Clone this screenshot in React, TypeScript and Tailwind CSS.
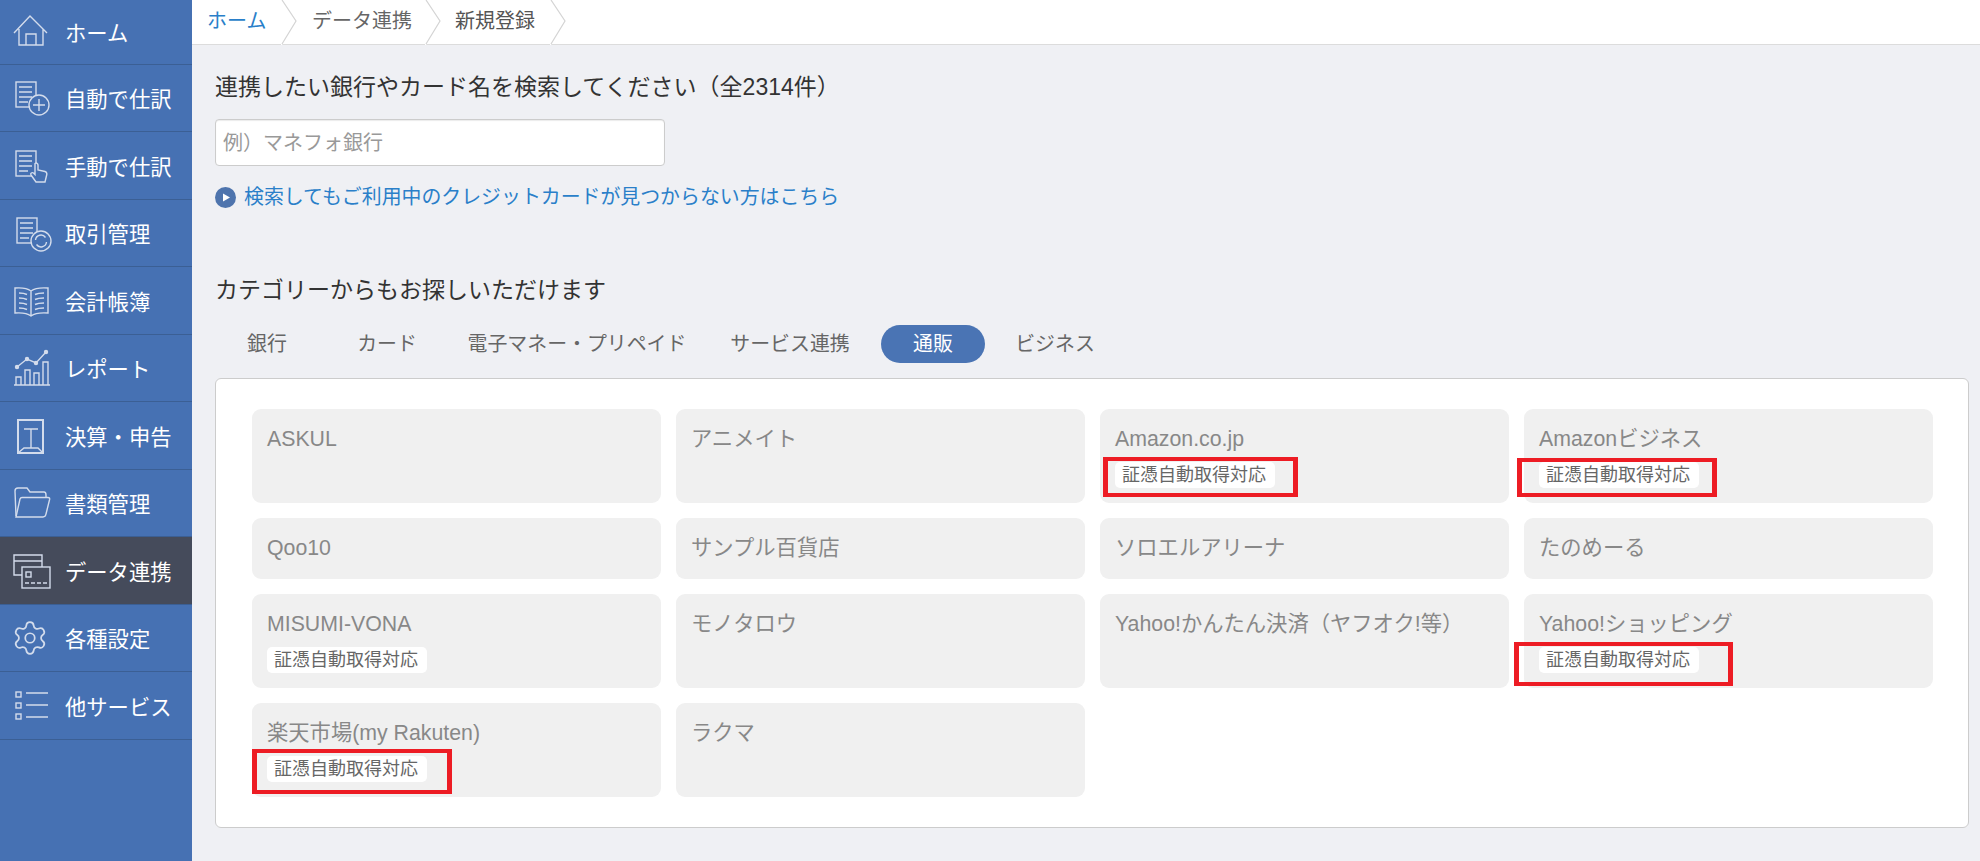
import type { ReactNode } from 'react';
import { Settings } from 'lucide-react';

const Doc = ({ x, y }: { x: number; y: number }) => (
    <>
        <rect x={x} y={y} width="20" height="25" />
        <path d={`M${x + 3} ${y + 5}h13M${x + 3} ${y + 10}h13M${x + 3} ${y + 15}h13M${x + 3} ${y + 20}h9`} />
    </>
);

const Icon = ({ children }: { children: ReactNode }) => (
    <svg viewBox="0 0 40 40" fill="none" stroke="currentColor" strokeWidth="1.4" className="w-10 h-10 shrink-0 text-[#d3dcec] overflow-visible">
        {children}
    </svg>
);

const sideItems: { label: string; active?: boolean; cls: string; icon: ReactNode }[] = [
    {
        label: 'ホーム',
        cls: 'h-[65px]',
        icon: (
            <Icon>
                <path d="M4 21 20 4l17 17M9 17v16h24V17M16 33V22h10v11" />
            </Icon>
        ),
    },
    {
        label: '自動で仕訳',
        cls: 'h-[67px]',
        icon: (
            <Icon>
                <Doc x={6} y={4} />
                <circle cx="29" cy="27" r="10" fill="#4671b3" />
                <path d="M29 21v12M23 27h12" />
            </Icon>
        ),
    },
    {
        label: '手動で仕訳',
        cls: 'h-[68px]',
        icon: (
            <Icon>
                <Doc x={6} y={5} />
                <path
                    d="M25 17.500c1.500-1 3 0 3 1.500V24l7 1.500c1.500.5 2 1.500 1.800 3L35 36H26l-5-7c-1-1.500 1-3 2.500-2l1.500 1.500Z"
                    fill="#4671b3"
                />
            </Icon>
        ),
    },
    {
        label: '取引管理',
        cls: 'h-[67px]',
        icon: (
            <Icon>
                <Doc x={7} y={5} />
                <circle cx="31" cy="28" r="10" fill="#4671b3" />
                <path d="M25.500 27a5.500 5.500 0 0 1 10-2.500M36.500 29a5.500 5.500 0 0 1-10 2.500" />
            </Icon>
        ),
    },
    {
        label: '会計帳簿',
        cls: 'h-[68px]',
        icon: (
            <Icon>
                <path d="M21 10C17 7 11 6.500 5 7v25c6-.5 12 0 16 3 4-3 10-3.500 17-3V7c-7-.5-13 0-17 3ZM21 10v25" />
                <path d="M9 12c3 0 6 .5 8 1.500M9 17c3 0 6 .5 8 1.500M9 22c3 0 6 .5 8 1.500M9 27c3 0 6 .5 8 1.500M34 12c-3 0-7 .5-9 1.500M34 17c-3 0-7 .5-9 1.500M34 22c-3 0-7 .5-9 1.500M34 27c-3 0-7 .5-9 1.500" />
            </Icon>
        ),
    },
    {
        label: 'レポート',
        cls: 'h-[67px]',
        icon: (
            <Icon>
                <path d="M4 37h36M6 37v-8h5v8M15 37V22h5v15M24 37V25h5v12M33 37V14h5v23" />
                <path d="m7 19 10-8 9 4 10-11" />
                <circle cx="7" cy="19" r="1.500" fill="currentColor" />
                <circle cx="17" cy="11" r="1.500" fill="currentColor" />
                <circle cx="26" cy="15" r="1.500" fill="currentColor" />
                <circle cx="36" cy="4" r="1.500" fill="currentColor" />
            </Icon>
        ),
    },
    {
        label: '決算・申告',
        cls: 'h-[68px]',
        icon: (
            <Icon>
                <rect x="8" y="4" width="25" height="33" strokeWidth="2" />
                <path d="M14 13h14M21 13v19M8 37l6-5h14l5 5" />
            </Icon>
        ),
    },
    {
        label: '書類管理',
        cls: 'h-[67px]',
        icon: (
            <Icon>
                <path d="M6 33 5 8q0-3 3-3h9l3 4h14q2 0 2 3v3" />
                <path d="M6 34 10 16q.5-1.500 2-1.500h26q2 0 1.600 2L36 31q-.5 3-3 3Z" />
            </Icon>
        ),
    },
    {
        label: 'データ連携',
        active: true,
        cls: 'h-[68px]',
        icon: (
            <Icon>
                <path d="M32 16V4H4v20h8M4 10h28" />
                <rect x="12" y="16" width="28" height="21" />
                <rect x="16" y="21" width="5" height="5" />
                <path d="M15 32h22" strokeDasharray="4 2" />
            </Icon>
        ),
    },
    {
        label: '各種設定',
        cls: 'h-[67px]',
        icon: (
            <span className="w-10 h-10 shrink-0 flex items-center justify-center text-[#d3dcec]">
                <Settings size={38} strokeWidth={1.1} />
            </span>
        ),
    },
    {
        label: '他サービス',
        cls: 'h-[68px]',
        icon: (
            <Icon>
                <rect x="6" y="6" width="5" height="5" />
                <rect x="6" y="17" width="5" height="5" />
                <rect x="6" y="28" width="5" height="5" />
                <path d="M16 7h22M16 19h22M16 31h22" />
            </Icon>
        ),
    },
];

const tabs = [
    { label: '銀行', cls: 'w-[104px]' },
    { label: 'カード', cls: 'w-[104px]' },
    { label: '電子マネー・プリペイド', cls: 'w-[244px]' },
    { label: 'サービス連携', cls: 'w-[150px]' },
    { label: '通販', cls: 'w-[104px] bg-[#4a74b4] text-white rounded-[19px]' },
    { label: 'ビジネス', cls: 'w-[108px]' },
];

// red marks were drawn by hand on the screenshot, so each one sits a bit differently
const services: { name: string; badge?: boolean; mark?: string }[] = [
    { name: 'ASKUL' },
    { name: 'アニメイト' },
    { name: 'Amazon.co.jp', badge: true, mark: '-left-[12px] -right-[23px] -top-[5px] -bottom-[9px]' },
    { name: 'Amazonビジネス', badge: true, mark: '-left-[22px] -right-[18px] -top-[4px] -bottom-[9px]' },
    { name: 'Qoo10' },
    { name: 'サンプル百貨店' },
    { name: 'ソロエルアリーナ' },
    { name: 'たのめーる' },
    { name: 'MISUMI-VONA', badge: true },
    { name: 'モノタロウ' },
    { name: 'Yahoo!かんたん決済（ヤフオク!等）' },
    { name: 'Yahoo!ショッピング', badge: true, mark: '-left-[25px] -right-[34px] -top-[5px] -bottom-[13px]' },
    { name: '楽天市場(my Rakuten)', badge: true, mark: '-left-[15px] -right-[25px] -top-[7px] -bottom-[12px]' },
    { name: 'ラクマ' },
];

const Chevron = () => (
    <svg viewBox="0 0 16 45" className="w-4 h-[45px] shrink-0 -mb-px" fill="none">
        <path d="M0 0h1l14 21L1 45H0Z" fill="#fff" />
        <path d="M1 0l14 21L1 44" stroke="#d4d4d4" strokeWidth="1.200" />
    </svg>
);

const App = () => {
    return (
        <div className="flex h-[861px] overflow-hidden bg-[#eff0f4] font-['Liberation_Sans','Noto_Sans_CJK_JP',sans-serif]">
            {/* Sidebar */}
            <aside className="w-[192px] shrink-0 bg-[#4671b3]">
                {sideItems.map((item) => (
                    <div
                        key={item.label}
                        className={`flex items-center gap-[15px] pl-[10px] border-b border-[#3b5f94] text-white text-[21.300px] ${item.cls} ${item.active ? 'bg-[#454b5b]' : ''}`}
                    >
                        {item.icon}
                        <span className="whitespace-nowrap pt-[6px]">{item.label}</span>
                    </div>
                ))}
            </aside>

            <main className="flex-1 min-w-0">
                {/* Breadcrumb */}
                <nav className="h-[45px] bg-white border-b border-[#dcdcdc] flex items-start pl-[15px] text-[20px] text-[#666]">
                    <span className="text-[#2a7fc9] leading-[42px] w-[74px]">ホーム</span>
                    <Chevron />
                    <span className="leading-[42px] ml-[15px] w-[113px]">データ連携</span>
                    <Chevron />
                    <span className="leading-[42px] ml-[14px] w-[95px] text-[#555]">新規登録</span>
                    <Chevron />
                </nav>

                <div className="pl-[23px] pr-[11px]">
                    <h2 className="mt-[25px] text-[23px] leading-[34px] text-[#333]">
                        連携したい銀行やカード名を検索してください（全2314件）
                    </h2>
                    <input
                        placeholder="例）マネフォ銀行"
                        className="block mt-[15px] w-[450px] h-[47px] pl-[7px] pt-[2px] bg-white border border-[#ccc] rounded text-[20px] outline-none shadow-[inset_0_1px_1px_rgba(0,0,0,0.08)] placeholder:text-[#999]"
                    />
                    <a className="mt-[16px] flex items-center gap-[8px] text-[19.900px] leading-[30px] text-[#2a7fc9]">
                        <svg viewBox="0 0 21 21" className="w-[21px] h-[21px] shrink-0">
                            <circle cx="10.500" cy="10.500" r="10.500" fill="#4e74ad" />
                            <path d="M8 6.500 15 10.500 8 14.500Z" fill="#fff" />
                        </svg>
                        検索してもご利用中のクレジットカードが見つからない方はこちら
                    </a>

                    <h2 className="mt-[61px] text-[23px] leading-[34px] text-[#333]">
                        カテゴリーからもお探しいただけます
                    </h2>

                    {/* Tabs */}
                    <div className="mt-[18px] flex gap-4">
                        {tabs.map((tab) => (
                            <div key={tab.label} className={`h-[38px] leading-[38px] text-center text-[19.900px] text-[#666] whitespace-nowrap ${tab.cls}`}>
                                {tab.label}
                            </div>
                        ))}
                    </div>

                    {/* Services */}
                    <div className="mt-[15px] bg-white border border-[#ccc] rounded-md pl-[36px] pr-[35px] pt-[30px] pb-[30px] grid grid-cols-4 gap-[15px]">
                        {services.map((s) => (
                            <div key={s.name} className="bg-[#f0f0f0] rounded-[9px] px-[15px] pt-[15px] pb-[15px] text-[21.300px] text-[#888]">
                                <div className="leading-[31px] whitespace-nowrap">{s.name}</div>
                                {s.badge && (
                                    <div className="relative mt-[7px] w-[160px] h-[26px] leading-[26px] text-center pr-[2px] bg-white rounded-[5px] text-[18px] text-[#666]">
                                        証憑自動取得対応
                                        {s.mark && <span className={`absolute border-x-[5px] border-y-4 border-[#ed1c24] ${s.mark}`} />}
                                    </div>
                                )}
                            </div>
                        ))}
                    </div>
                </div>
            </main>
        </div>
    );
};

export default App;
